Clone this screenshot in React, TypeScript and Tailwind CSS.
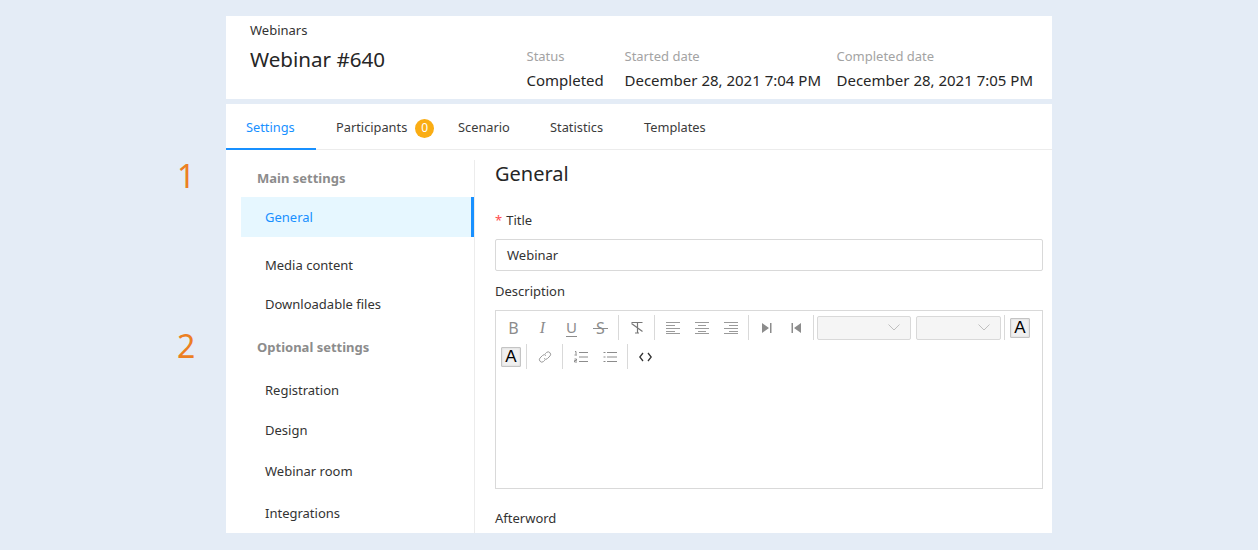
import React from "react";

function Sep({ className = "mx-[3px]" }: { className?: string }) {
  return <div className={`h-[25px] w-px shrink-0 bg-[#d9d9d9] ${className}`} />;
}

function Btn({ children }: { children: React.ReactNode }) {
  return <div className="relative flex h-[24px] w-[29px] shrink-0 items-center justify-center text-[#8c8c8c]">{children}</div>;
}

function AlignIcon({ kind }: { kind: "l" | "c" | "r" }) {
  const short = kind === "l" ? "M0 4.5h9M0 10.5h9" : kind === "c" ? "M3 4.5h8M3 10.5h8" : "M5 4.5h9M5 10.5h9";
  return (
    <svg width="14" height="13" viewBox="0 0 14 13" fill="none" stroke="#9a9a9a" strokeWidth="1">
      <path d="M0 1.5h14M0 7.5h14M0 12.5h14" />
      <path d={short} />
    </svg>
  );
}

function ColorA() {
  return (
    <div className="flex h-[20px] w-[20px] shrink-0 items-center justify-center rounded-[1px] border border-[#c4c4c4] bg-[#f0f0f0] shadow-[inset_0_0_2px_#ccc]">
      <span className="text-[17px] leading-[18px] text-black [font-family:'Liberation_Sans',sans-serif]">A</span>
    </div>
  );
}

function Chevron() {
  return (
    <svg width="12" height="7" viewBox="0 0 12 7" fill="none" stroke="#bfbfbf" strokeWidth="1">
      <path d="M0.5 0.5L6 6l5.5-5.5" />
    </svg>
  );
}

function Select({ w }: { w: string }) {
  return (
    <div className={`flex h-[24px] shrink-0 items-center justify-end rounded-[2px] border border-[#d9d9d9] bg-[#f5f5f5] pr-[10px] ${w}`}>
      <Chevron />
    </div>
  );
}

function Meta({ label, value, className }: { label: string; value: string; className: string }) {
  return (
    <div className={className}>
      <div className="text-[13px] leading-[22px] text-[#a3a3a3]">{label}</div>
      <div className="mt-[1px] whitespace-nowrap text-[15px] leading-[24px] text-[#262626]">{value}</div>
    </div>
  );
}

function Tab({ children, active, className }: { children: React.ReactNode; active?: boolean; className: string }) {
  return (
    <div
      className={`flex h-[46px] items-center text-[12.8px] ${className} ${
        active ? "border-b-2 border-[#1890ff] pt-[4px] text-[#1890ff]" : "pt-[2px] text-[#3b3b3b]"
      }`}
    >
      {children}
    </div>
  );
}

function NavItem({ children, className }: { children: React.ReactNode; className: string }) {
  return <div className={`pl-[24px] text-[13px] leading-[22px] text-[#333] ${className}`}>{children}</div>;
}

export default function App() {
  return (
    <div className="relative h-[550px] w-[1258px] overflow-hidden bg-[#e4ecf6] pt-[16px] pl-[226px] [font-family:'Noto_Sans',sans-serif]">
      <div className="absolute left-[177px] top-[157px] text-[32px] leading-[38px] text-[#ec7f22]">1</div>
      <div className="absolute left-[177px] top-[327px] text-[32px] leading-[38px] text-[#ec7f22]">2</div>

      <div className="w-[826px]">
        <header className="flex h-[83px] bg-white pl-[24px]">
          <div className="w-[276.5px]">
            <div className="pt-[4px] text-[13px] leading-[20px] text-[#333]">Webinars</div>
            <div className="mt-[2px] text-[20.6px] leading-[34px] text-[#262626]">Webinar #640</div>
          </div>
          <div className="flex pt-[29px]">
            <Meta label="Status" value="Completed" className="w-[98px]" />
            <Meta label="Started date" value="December 28, 2021 7:04 PM" className="w-[212px]" />
            <Meta label="Completed date" value="December 28, 2021 7:05 PM" className="w-[198px]" />
          </div>
        </header>

        <div className="mt-[5px] h-[429px] overflow-hidden bg-white">
          <nav className="flex h-[46px] border-b border-[#ececec]">
            <Tab active className="w-[90px] pl-[20px]">Settings</Tab>
            <Tab className="ml-[20px] w-[98px]">
              Participants
              <span className="ml-[8px] flex h-[19px] w-[19px] shrink-0 items-center justify-center rounded-full bg-[#faad14] text-[12px] text-white">0</span>
            </Tab>
            <Tab className="ml-[24px] w-[72px]">Scenario</Tab>
            <Tab className="ml-[20px] w-[74px]">Statistics</Tab>
            <Tab className="ml-[20px]">Templates</Tab>
          </nav>

          <div className="flex pt-[10px]">
            <aside className="h-[400px] w-[249px] border-r border-[#ececec] pl-[15px]">
              <div className="pl-[16px] pt-[7px] text-[13px] font-bold leading-[22px] text-[#8c8c8c]">Main settings</div>
              <div className="mt-[8px] flex h-[40px] items-center border-r-[3px] border-[#1890ff] bg-[#e6f7ff] pl-[24px] pt-[2px] text-[13px] text-[#1890ff]">General</div>
              <NavItem className="mt-[17px]">Media content</NavItem>
              <NavItem className="mt-[17px]">Downloadable files</NavItem>
              <div className="mt-[21px] pl-[16px] text-[13px] font-bold leading-[22px] text-[#8c8c8c]">Optional settings</div>
              <NavItem className="mt-[21px]">Registration</NavItem>
              <NavItem className="mt-[18px]">Design</NavItem>
              <NavItem className="mt-[19px]">Webinar room</NavItem>
              <NavItem className="mt-[20px]">Integrations</NavItem>
            </aside>

            <main className="ml-[20px] w-[548px]">
              <h1 className="text-[20px] leading-[28px] text-[#262626]">General</h1>
              <div className="mt-[21px] text-[13px] leading-[22px] text-[#333]">
                <span className="mr-[4px] text-[#ff4d4f]">*</span>Title
              </div>
              <div className="mt-[8px] flex h-[32px] items-center rounded-[2px] border border-[#d9d9d9] pl-[11px] pt-[1px] text-[13px] text-[#333]">Webinar</div>
              <div className="mt-[9px] text-[13px] leading-[22px] text-[#333]">Description</div>

              <div className="mt-[8px] h-[179px] border border-[#d9d9d9] pl-[3px] pt-[4px]">
                <div className="flex h-[25px] items-center">
                  <Btn><span className="text-[16px] leading-none">B</span></Btn>
                  <Btn><span className="text-[16px] italic leading-none [font-family:'Liberation_Serif',serif]">I</span></Btn>
                  <Btn>
                    <span className="text-[15px] leading-none">U</span>
                    <span className="absolute left-[9px] top-[20px] h-px w-[11px] bg-[#8c8c8c]" />
                  </Btn>
                  <Btn>
                    <span className="text-[16px] leading-none">S</span>
                    <span className="absolute left-[7px] top-[12px] h-px w-[15px] bg-[#8c8c8c]" />
                  </Btn>
                  <Sep />
                  <Btn>
                    <svg width="14" height="13" viewBox="0 0 14 13" fill="none" stroke="#777" strokeWidth="1.2">
                      <path d="M1.5 1.5h11M7.5 2v10M5 12h4M1.5 2.5l11 8" />
                    </svg>
                  </Btn>
                  <Sep />
                  <Btn><AlignIcon kind="l" /></Btn>
                  <Btn><AlignIcon kind="c" /></Btn>
                  <Btn><AlignIcon kind="r" /></Btn>
                  <Sep />
                  <Btn>
                    <svg width="10" height="12" viewBox="0 0 10 12" fill="#8c8c8c"><path d="M0 1l7 5-7 5zM8 1h1.5v10H8z" /></svg>
                  </Btn>
                  <Btn>
                    <svg width="10" height="12" viewBox="0 0 10 12" fill="#8c8c8c"><path d="M10 1L3 6l7 5zM0.5 1H2v10H0.5z" /></svg>
                  </Btn>
                  <Sep />
                  <Select w="w-[94px]" />
                  <div className="w-[5px] shrink-0" />
                  <Select w="w-[85px]" />
                  <Sep className="ml-[3px] mr-[5px]" />
                  <ColorA />
                </div>
                <div className="mt-[4px] flex h-[25px] items-center pl-[2px]">
                  <ColorA />
                  <Sep className="ml-[5px] mr-[3px]" />
                  <Btn>
                    <svg width="14" height="14" viewBox="0 0 14 14" fill="none" stroke="#999" strokeWidth="1">
                      <path d="M6 8.5a2.4 2.4 0 0 0 3.5 0l2.6-2.6a2.5 2.5 0 0 0-3.5-3.5L7.2 3.8" />
                      <path d="M8 5.5a2.4 2.4 0 0 0-3.5 0L1.9 8.1a2.5 2.5 0 0 0 3.5 3.5l1.4-1.4" />
                    </svg>
                  </Btn>
                  <Sep />
                  <Btn>
                    <svg width="14" height="12" viewBox="0 0 14 12" fill="none" stroke="#8c8c8c" strokeWidth="1">
                      <path d="M5 1.5h9M5 6h9M5 10.5h9M1 0.5h1v3M0.5 4h2.5M0.5 8h2v1.5h-2V11h2.5" />
                    </svg>
                  </Btn>
                  <Btn>
                    <svg width="14" height="12" viewBox="0 0 14 12" fill="none" stroke="#8c8c8c" strokeWidth="1">
                      <path d="M4 1.5h10M4 6h10M4 10.5h10M0.5 1.5h2M0.5 6h2M0.5 10.5h2" />
                    </svg>
                  </Btn>
                  <Sep />
                  <Btn>
                    <svg width="13" height="10" viewBox="0 0 13 10" fill="none" stroke="#333" strokeWidth="1.3">
                      <path d="M4 1L0.8 5 4 9M9 1l3.2 4L9 9" />
                    </svg>
                  </Btn>
                </div>
              </div>

              <div className="mt-[18px] text-[13px] leading-[22px] text-[#333]">Afterword</div>
            </main>
          </div>
        </div>
      </div>
    </div>
  );
}
